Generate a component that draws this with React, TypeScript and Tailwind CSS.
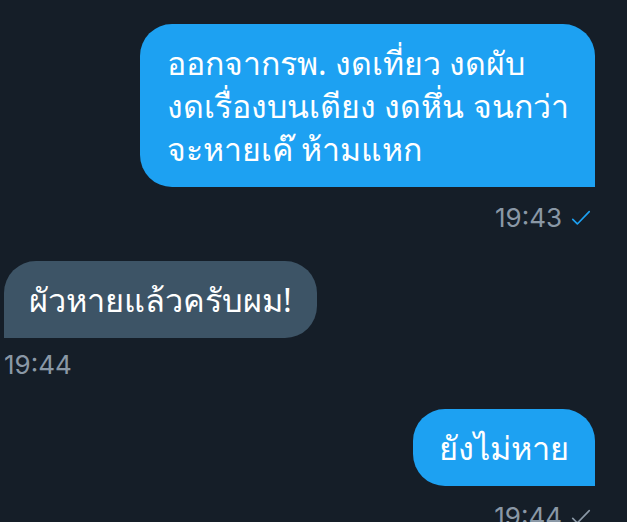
const Check = ({ className }: { className: string }) => (
  <svg viewBox="0 0 24 24" className={className} fill="none" stroke="currentColor" strokeWidth={1.8} strokeLinecap="round" strokeLinejoin="round">
    <path d="M3 13.5l5 5L21 5" />
  </svg>
);

const App = () => {
  return (
    <div
      className="h-[522px] w-[627px] overflow-hidden bg-[#151e28] pt-6 pl-1 pr-8 text-white"
      style={{ fontFamily: '"Noto Sans", "Open Sans", sans-serif' }}
    >
      <div className="flex flex-col items-end">
        <div className="w-[455px] whitespace-nowrap rounded-[32px] rounded-br-none bg-[#1da1f2] px-[27px] py-[17px] text-[32px] leading-[43px]">
          ออกจากรพ. งดเที่ยว งดผับ
          <br />
          งดเรื่องบนเตียง งดหึ่น จนกว่า
          <br />
          จะหายเค๊ ห้ามแหก
        </div>
        <div className="mt-4 mr-[3px] flex items-center gap-2 font-['Inter',sans-serif] text-[26px] leading-[30px] text-[#8a98a6]">
          <span>19:43</span>
          <Check className="h-[22px] w-[22px] text-[#1da1f2]" />
        </div>
      </div>

      <div className="mt-[28px] flex flex-col items-start">
        <div className="rounded-[32px] rounded-bl-none bg-[#3d5466] px-[25px] py-[17px] text-[32.5px] leading-[43px]">
          ผัวหายแล้วครับผม!
        </div>
        <div className="mt-3 font-['Inter',sans-serif] text-[26px] leading-[30px] text-[#8a98a6]">19:44</div>
      </div>

      <div className="mt-[29px] flex flex-col items-end">
        <div className="rounded-[32px] rounded-br-none bg-[#1da1f2] px-[26px] py-[17px] text-[32.5px] leading-[43px]">
          ยังไม่หาย
        </div>
        <div className="mt-4 mr-[3px] flex items-center gap-2 font-['Inter',sans-serif] text-[26px] leading-[30px] text-[#8a98a6]">
          <span>19:44</span>
          <Check className="h-[22px] w-[22px] text-[#8a98a6]" />
        </div>
      </div>
    </div>
  );
};

export default App;
